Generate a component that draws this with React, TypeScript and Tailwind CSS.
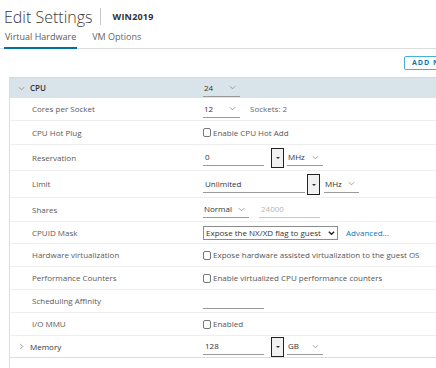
import React from "react";

const font = { fontFamily: '"Open Sans", "Liberation Sans", sans-serif' };

const Chevron = ({ open = true }: { open?: boolean }) => (
  <svg width="7" height="7" viewBox="0 0 8 8" className="text-[#8a8a8a]">
    {open ? (
      <path d="M1 2.5 L4 5.5 L7 2.5" fill="none" stroke="currentColor" strokeWidth="0.9" />
    ) : (
      <path d="M2.5 1 L5.5 4 L2.5 7" fill="none" stroke="currentColor" strokeWidth="0.9" />
    )}
  </svg>
);

const Select = ({ value, w }: { value: string; w: string }) => (
  <div className={`flex items-center justify-between border-b border-[#9a9a9a] h-[17px] pl-[1px] pr-[4px] ${w}`}>
    <span className="text-[#333]">{value}</span>
    <Chevron />
  </div>
);

const Input = ({ value, w, muted }: { value: string; w: string; muted?: boolean }) => (
  <div className={`flex items-center border-b ${muted ? "border-[#c8c8c8]" : "border-[#9a9a9a]"} h-[17px] pl-[2px] ${w}`}>
    <span className={muted ? "text-[#b5b5b5]" : "text-[#333]"}>{value}</span>
  </div>
);

const DropBtn = ({ h }: { h: string }) => (
  <div className={`flex items-center justify-center w-[13px] ${h} border border-[#222] bg-[#f1f1f1]`}>
    <div className="w-0 h-0 border-l-[2px] border-r-[2px] border-t-[2px] border-l-transparent border-r-transparent border-t-[#333] mt-[1px]" />
  </div>
);

const Check = ({ label }: { label: string }) => (
  <div className="flex items-center gap-[2px]">
    <div className="w-[8px] h-[9px] border border-[#777] rounded-[2px] bg-white" />
    <span className="text-[#555]">{label}</span>
  </div>
);

const Row = ({ label, h, children }: { label: string; h: string; children?: React.ReactNode }) => (
  <div className={`flex items-center border-b border-[#eeeeee] ${h}`}>
    <div className="w-[193px] pl-[22px] text-[#5a5a5a]">{label}</div>
    <div className="flex items-center flex-1">{children}</div>
  </div>
);

export default function App() {
  return (
    <div className="w-[436px] h-[368px] overflow-hidden bg-white text-[8px]" style={font}>
      <div className="flex items-center h-[33px] pl-[4px]">
        <span className="text-[16px] font-light text-[#3a3a3a]">Edit Settings</span>
        <div className="w-px h-[17px] bg-[#c9c9c9] ml-[7px] mr-[12px]" />
        <span className="text-[9px] font-bold text-[#333] tracking-[0.2px]">WIN2019</span>
      </div>
      <div className="flex items-end h-[16px] border-b border-[#dddddd] text-[9px] text-[#5a5a5a]">
        <div className="ml-[4px] pb-[4px] px-[1px] border-b-2 border-[#0072a3] -mb-px">Virtual Hardware</div>
        <div className="ml-[15px] pb-[5px] text-[#666]">VM Options</div>
      </div>
      <div className="flex justify-end h-[28px] items-center">
        <div className="w-[50px] h-[14px] -mr-[18px] border border-[#49afd9] rounded-[2px] text-[#0079b8] text-[7px] font-bold tracking-[1px] flex items-center pl-[7px] overflow-hidden whitespace-nowrap">
          ADD NEW DEVICE
        </div>
      </div>
      <div className="ml-[9px] border-l border-[#dddddd]">
        <div className="flex items-center h-[21px] bg-[#d9e3ea] border-t border-[#cfd8de]">
          <div className="w-[193px] flex items-center pl-[8px] gap-[5px] text-[#333] font-semibold">
            <Chevron />
            <span>CPU</span>
          </div>
          <Select value="24" w="w-[37px]" />
        </div>
        <Row label="Cores per Socket" h="h-[23px]">
          <Select value="12" w="w-[37px]" />
          <span className="ml-[10px] text-[#666]">Sockets: 2</span>
        </Row>
        <Row label="CPU Hot Plug" h="h-[24px]">
          <Check label="Enable CPU Hot Add" />
        </Row>
        <Row label="Reservation" h="h-[26px]">
          <Input value="0" w="w-[61px]" />
          <div className="ml-[7px]">
            <DropBtn h="h-[20px]" />
          </div>
          <div className="ml-[3px]">
            <Select value="MHz" w="w-[36px]" />
          </div>
        </Row>
        <Row label="Limit" h="h-[27px]">
          <Input value="Unlimited" w="w-[102px]" />
          <div className="ml-[2px]">
            <DropBtn h="h-[21px]" />
          </div>
          <div className="ml-[4px]">
            <Select value="MHz" w="w-[35px]" />
          </div>
        </Row>
        <Row label="Shares" h="h-[24px]">
          <Select value="Normal" w="w-[46px]" />
          <div className="ml-[10px]">
            <Input value="24000" w="w-[61px]" muted />
          </div>
        </Row>
        <Row label="CPUID Mask" h="h-[22px]">
          <div className="flex items-center w-[135px] h-[14px] border border-[#8c8c8c] px-[2px] justify-between text-[#333]">
            <span>Expose the NX/XD flag to guest</span>
            <svg width="7" height="6" viewBox="0 0 8 6">
              <path d="M1 1.5 L4 4.5 L7 1.5" fill="none" stroke="#222" strokeWidth="1.6" />
            </svg>
          </div>
          <span className="ml-[8px] text-[#0079b8]">Advanced...</span>
        </Row>
        <Row label="Hardware virtualization" h="h-[23px]">
          <Check label="Expose hardware assisted virtualization to the guest OS" />
        </Row>
        <Row label="Performance Counters" h="h-[23px]">
          <Check label="Enable virtualized CPU performance counters" />
        </Row>
        <Row label="Scheduling Affinity" h="h-[23px]">
          <div className="w-[61px] h-[14px] border-b border-[#9a9a9a] mt-[2px]" />
        </Row>
        <Row label="I/O MMU" h="h-[23px]">
          <Check label="Enabled" />
        </Row>
        <div className="flex items-center h-[22px] border-b border-[#dddddd]">
          <div className="w-[193px] flex items-center pl-[8px] gap-[5px] text-[#333]">
            <Chevron open={false} />
            <span>Memory</span>
          </div>
          <Input value="128" w="w-[61px]" />
          <div className="ml-[7px]">
            <DropBtn h="h-[20px]" />
          </div>
          <div className="ml-[3px]">
            <Select value="GB" w="w-[36px]" />
          </div>
        </div>
        <div className="h-[20px]" />
      </div>
    </div>
  );
}
